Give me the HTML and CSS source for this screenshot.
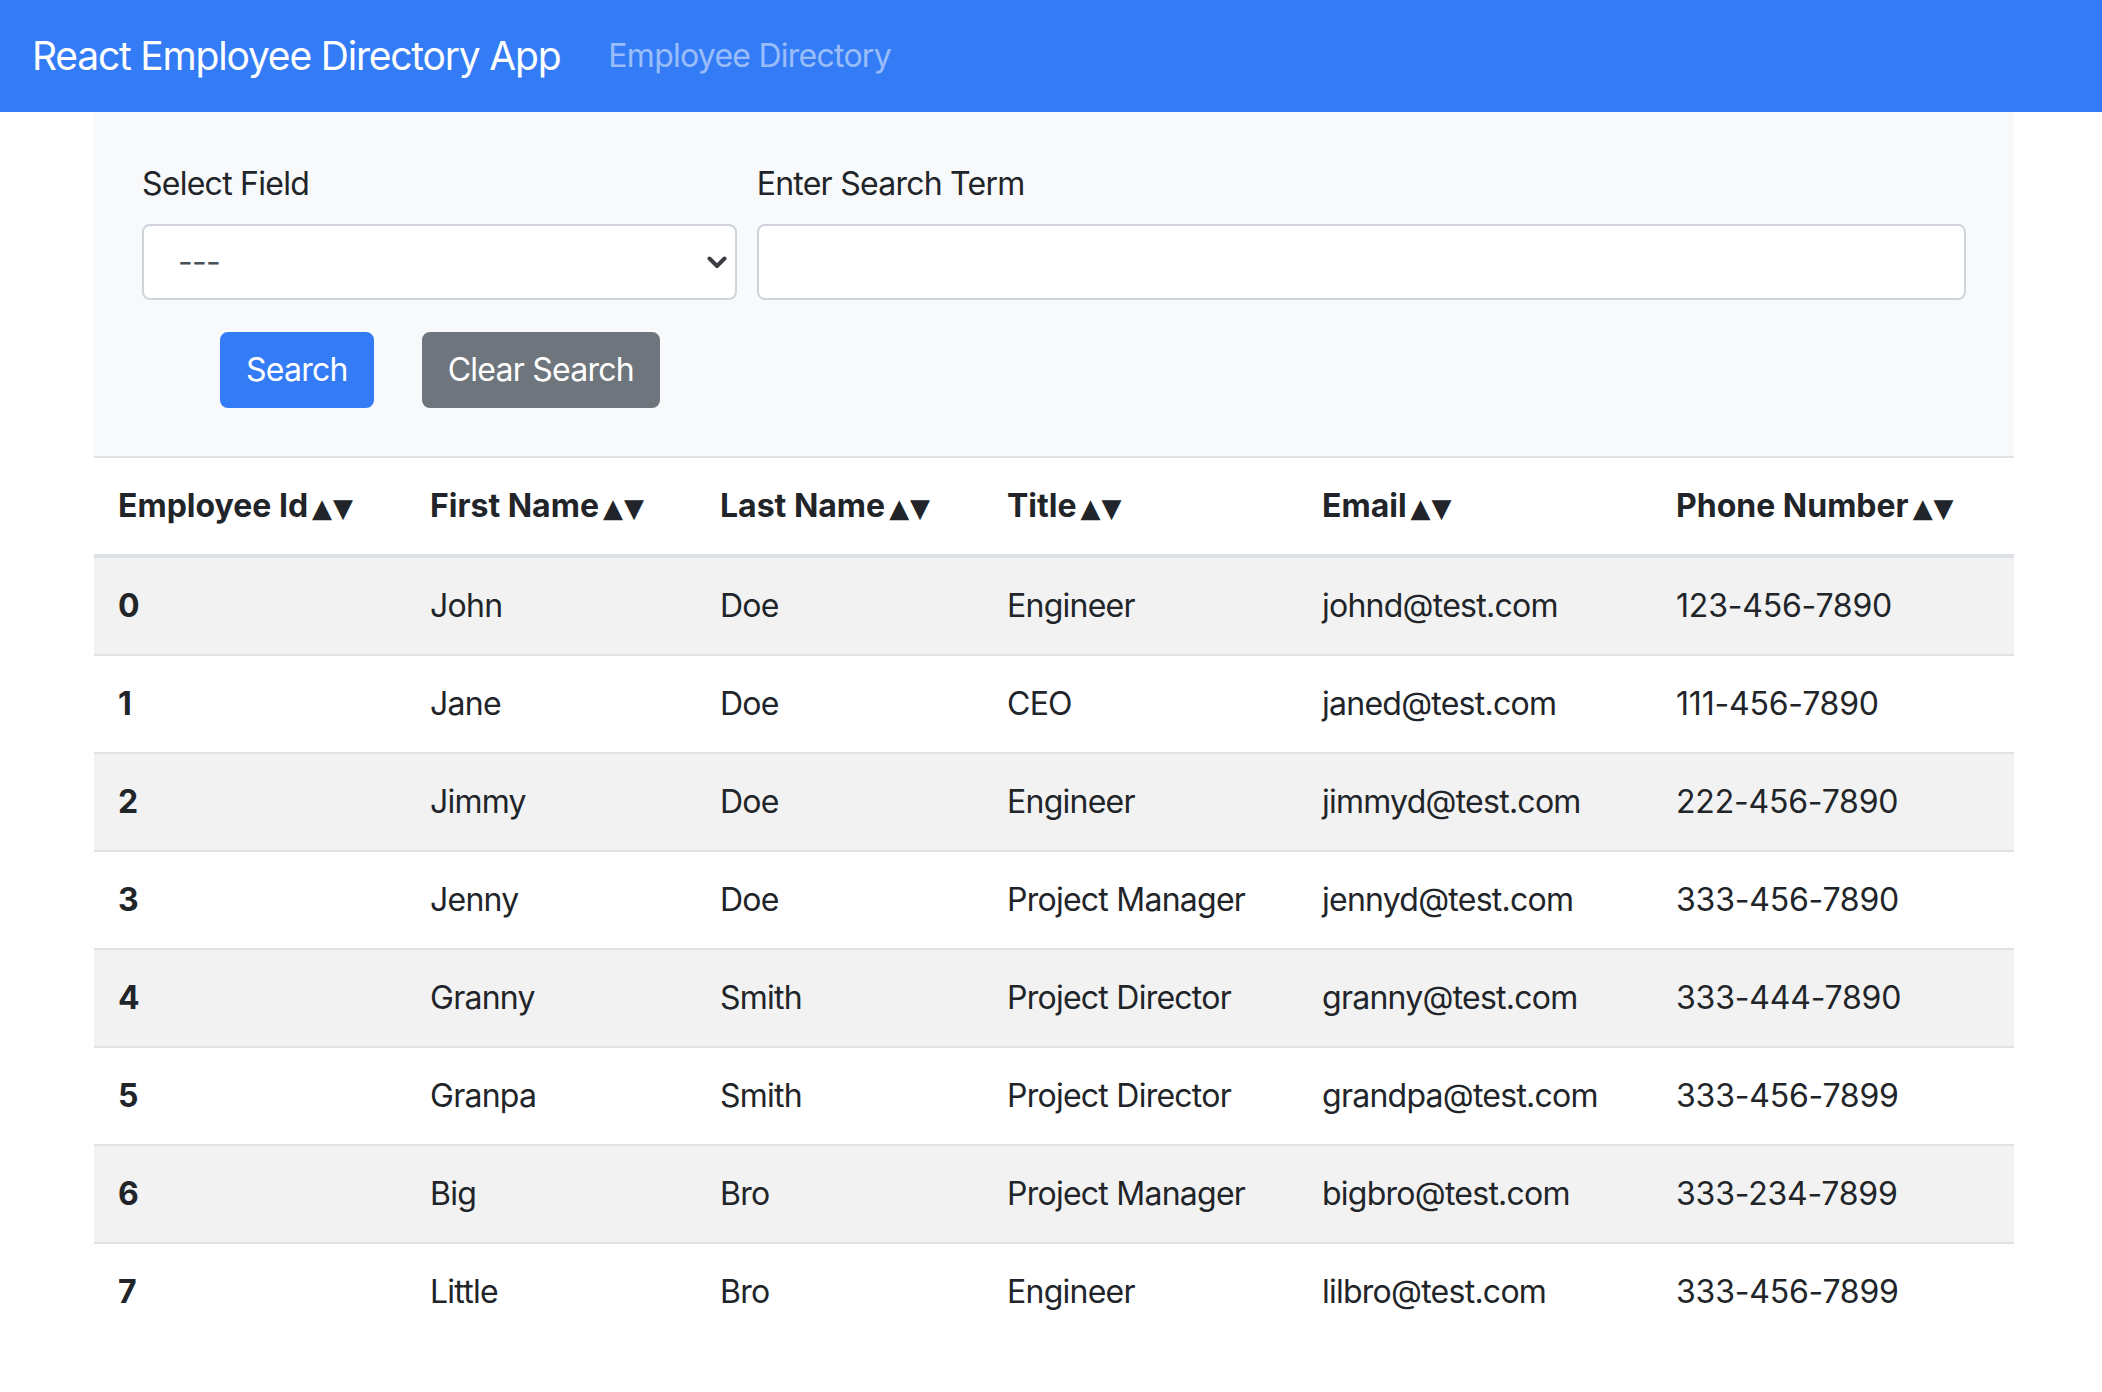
FILE: index.html
```html
<!DOCTYPE html>
<html lang="en">
<head>
<meta charset="utf-8">
<title>React Employee Directory App</title>
<link rel="stylesheet" href="styles.css">
</head>
<body>
<nav class="navbar">
  <span class="brand">React Employee Directory App</span>
  <a class="nav-link" href="#">Employee Directory</a>
</nav>
<main class="container">
  <form class="search-panel">
    <div class="form-row">
      <div class="field">
        <label class="label" for="field">Select Field</label>
        <select class="control select" id="field">
          <option>---</option>
        </select>
      </div>
      <div class="field">
        <label class="label" for="term">Enter Search Term</label>
        <input class="control" id="term" type="text">
      </div>
    </div>
    <div class="actions">
      <button type="button" class="btn btn-primary">Search</button>
      <button type="button" class="btn btn-secondary">Clear Search</button>
    </div>
  </form>
  <table class="table">
    <colgroup>
      <col class="c1"><col class="c2"><col class="c3"><col class="c4"><col class="c5"><col class="c6">
    </colgroup>
    <thead>
      <tr>
        <th>Employee Id<span class="sort">▲▼</span></th>
        <th>First Name<span class="sort">▲▼</span></th>
        <th>Last Name<span class="sort">▲▼</span></th>
        <th>Title<span class="sort">▲▼</span></th>
        <th>Email<span class="sort">▲▼</span></th>
        <th>Phone Number<span class="sort">▲▼</span></th>
      </tr>
    </thead>
    <tbody>
      <tr><th>0</th><td>John</td><td>Doe</td><td>Engineer</td><td>johnd@test.com</td><td class="phone">123-456-7890</td></tr>
      <tr><th>1</th><td>Jane</td><td>Doe</td><td>CEO</td><td>janed@test.com</td><td class="phone">111-456-7890</td></tr>
      <tr><th>2</th><td>Jimmy</td><td>Doe</td><td>Engineer</td><td>jimmyd@test.com</td><td class="phone">222-456-7890</td></tr>
      <tr><th>3</th><td>Jenny</td><td>Doe</td><td>Project Manager</td><td>jennyd@test.com</td><td class="phone">333-456-7890</td></tr>
      <tr><th>4</th><td>Granny</td><td>Smith</td><td>Project Director</td><td>granny@test.com</td><td class="phone">333-444-7890</td></tr>
      <tr><th>5</th><td>Granpa</td><td>Smith</td><td>Project Director</td><td>grandpa@test.com</td><td class="phone">333-456-7899</td></tr>
      <tr><th>6</th><td>Big</td><td>Bro</td><td>Project Manager</td><td>bigbro@test.com</td><td class="phone">333-234-7899</td></tr>
      <tr><th>7</th><td>Little</td><td>Bro</td><td>Engineer</td><td>lilbro@test.com</td><td class="phone">333-456-7899</td></tr>
    </tbody>
  </table>
</main>
</body>
</html>
```
FILE: styles.css
```css
* { box-sizing: border-box; }

html, body {
  margin: 0;
  padding: 0;
  background: #ffffff;
}

body {
  font-family: Inter, "Noto Sans", "Liberation Sans", sans-serif;
  font-size: 32px;
  line-height: 1.5;
  letter-spacing: -0.75px;
  color: #212529;
}

/* Navbar */
.navbar {
  display: flex;
  align-items: center;
  height: 112px;
  padding: 16px 32px;
  background: #337cf6;
}

.brand {
  font-size: 39px;
  line-height: 60px;
  letter-spacing: -1.2px;
  padding: 10px 0;
  margin-right: 32px;
  color: #ffffff;
  white-space: nowrap;
}

.nav-link {
  font-size: 32px;
  line-height: 48px;
  padding: 16px;
  color: rgba(255, 255, 255, 0.5);
  text-decoration: none;
}

/* Container */
.container {
  width: 1920px;
  margin: 0 88px 0 auto;
}

/* Search panel */
.search-panel {
  background: #f8f9fa;
  padding: 48px;
  margin: 0;
}

.form-row {
  display: grid;
  grid-template-columns: calc((100% + 20px) / 3 - 20px) 1fr;
  column-gap: 20px;
  margin-bottom: 32px;
}

.field {
  display: flex;
  flex-direction: column;
}

.label {
  display: block;
  line-height: 48px;
  margin-bottom: 16px;
  color: #212529;
}

.control {
  display: block;
  width: 100%;
  height: 76px;
  padding: 12px 24px;
  font-family: inherit;
  font-size: 32px;
  line-height: 48px;
  letter-spacing: inherit;
  color: #495057;
  background: #ffffff;
  border: 2px solid #ced4da;
  border-radius: 8px;
  outline: none;
}

.select {
  appearance: none;
  -webkit-appearance: none;
  padding-left: 34px;
  padding-right: 48px;
  background-image: url("data:image/svg+xml,%3Csvg xmlns='http://www.w3.org/2000/svg' width='20' height='13' viewBox='0 0 20 13'%3E%3Cpath d='M2.5 2.5 L10 10 L17.5 2.5' fill='none' stroke='%233a3d42' stroke-width='4' stroke-linecap='round' stroke-linejoin='round'/%3E%3C/svg%3E");
  background-repeat: no-repeat;
  background-position: right 8px center;
  background-size: 20px 13px;
}

.actions {
  display: flex;
  gap: 48px;
  padding-left: 78px;
}

.btn {
  height: 76px;
  padding: 12px 24px;
  font-family: inherit;
  font-size: 32px;
  line-height: 48px;
  letter-spacing: inherit;
  color: #ffffff;
  border: 2px solid transparent;
  border-radius: 8px;
  cursor: pointer;
}

.btn-primary {
  background: #337cf6;
  border-color: #337cf6;
}

.btn-secondary {
  background: #6f757d;
  border-color: #6f757d;
}

/* Table */
.table {
  width: 100%;
  border-collapse: collapse;
  table-layout: fixed;
  color: #212529;
}

.c1 { width: 312px; }
.c2 { width: 290px; }
.c3 { width: 287px; }
.c4 { width: 315px; }
.c5 { width: 354px; }
.c6 { width: 362px; }

.table th,
.table td {
  padding: 24px;
  line-height: 48px;
  text-align: left;
  vertical-align: top;
  border-top: 2px solid #dee2e6;
  white-space: nowrap;
}

.table th {
  font-weight: 700;
  letter-spacing: -0.3px;
}

.table td {
  font-weight: 400;
}

.table td.phone {
  letter-spacing: -0.2px;
}

.table thead th {
  letter-spacing: 0;
  border-bottom: 4px solid #dee2e6;
}

.table tbody tr:nth-child(odd) {
  background: #f2f2f2;
}

.sort {
  font-family: "DejaVu Sans", sans-serif;
  font-size: 26px;
  line-height: 0;
  margin-left: 4px;
  letter-spacing: 1px;
}
```
